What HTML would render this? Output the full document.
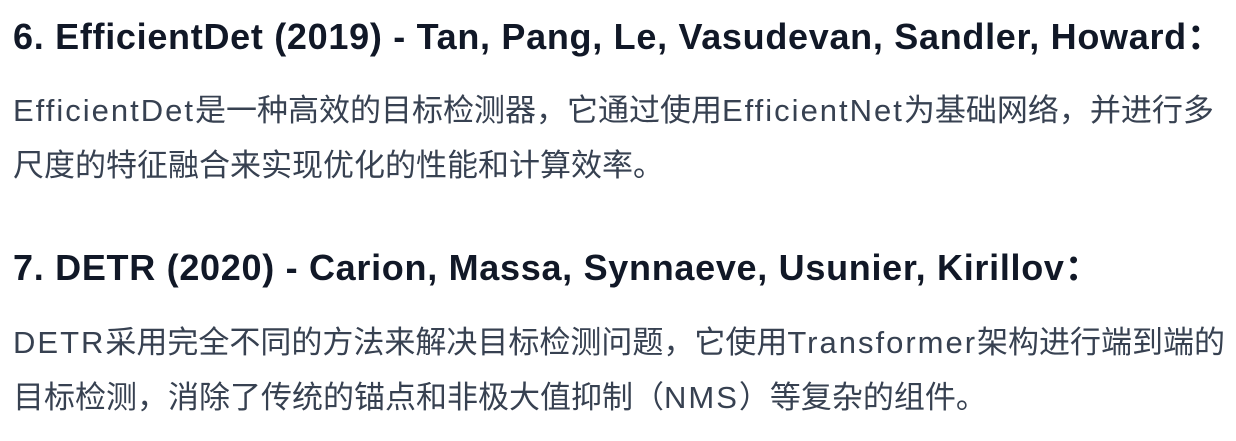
<!DOCTYPE html>
<html><head><meta charset="utf-8"><style>
body{margin:0;width:1236px;height:441px;background:#fff;overflow:hidden;font-family:"Liberation Sans","Noto Sans CJK SC",sans-serif;}
h3{position:absolute;left:13px;margin:0;font-size:36px;font-weight:bold;color:#111827;letter-spacing:0.7px;white-space:nowrap;line-height:40px;}
p{position:absolute;left:13px;margin:0;font-size:31px;color:#374151;line-height:55px;white-space:nowrap;}
i{font-style:normal;letter-spacing:2px;}
</style></head><body>
<h3 style="top:17px">6. EfficientDet (2019) - Tan, Pang, Le, Vasudevan, Sandler, Howard：</h3>
<p style="top:83px"><i>EfficientDet</i>是一种高效的目标检测器，它通过使用<i>EfficientNet</i>为基础网络，并进行多<br>尺度的特征融合来实现优化的性能和计算效率。</p>
<h3 style="top:248px">7. DETR (2020) - Carion, Massa, Synnaeve, Usunier, Kirillov：</h3>
<p style="top:315px"><i>DETR</i>采用完全不同的方法来解决目标检测问题，它使用<i>Transformer</i>架构进行端到端的<br>目标检测，消除了传统的锚点和非极大值抑制（<i>NMS</i>）等复杂的组件。</p>
</body></html>
